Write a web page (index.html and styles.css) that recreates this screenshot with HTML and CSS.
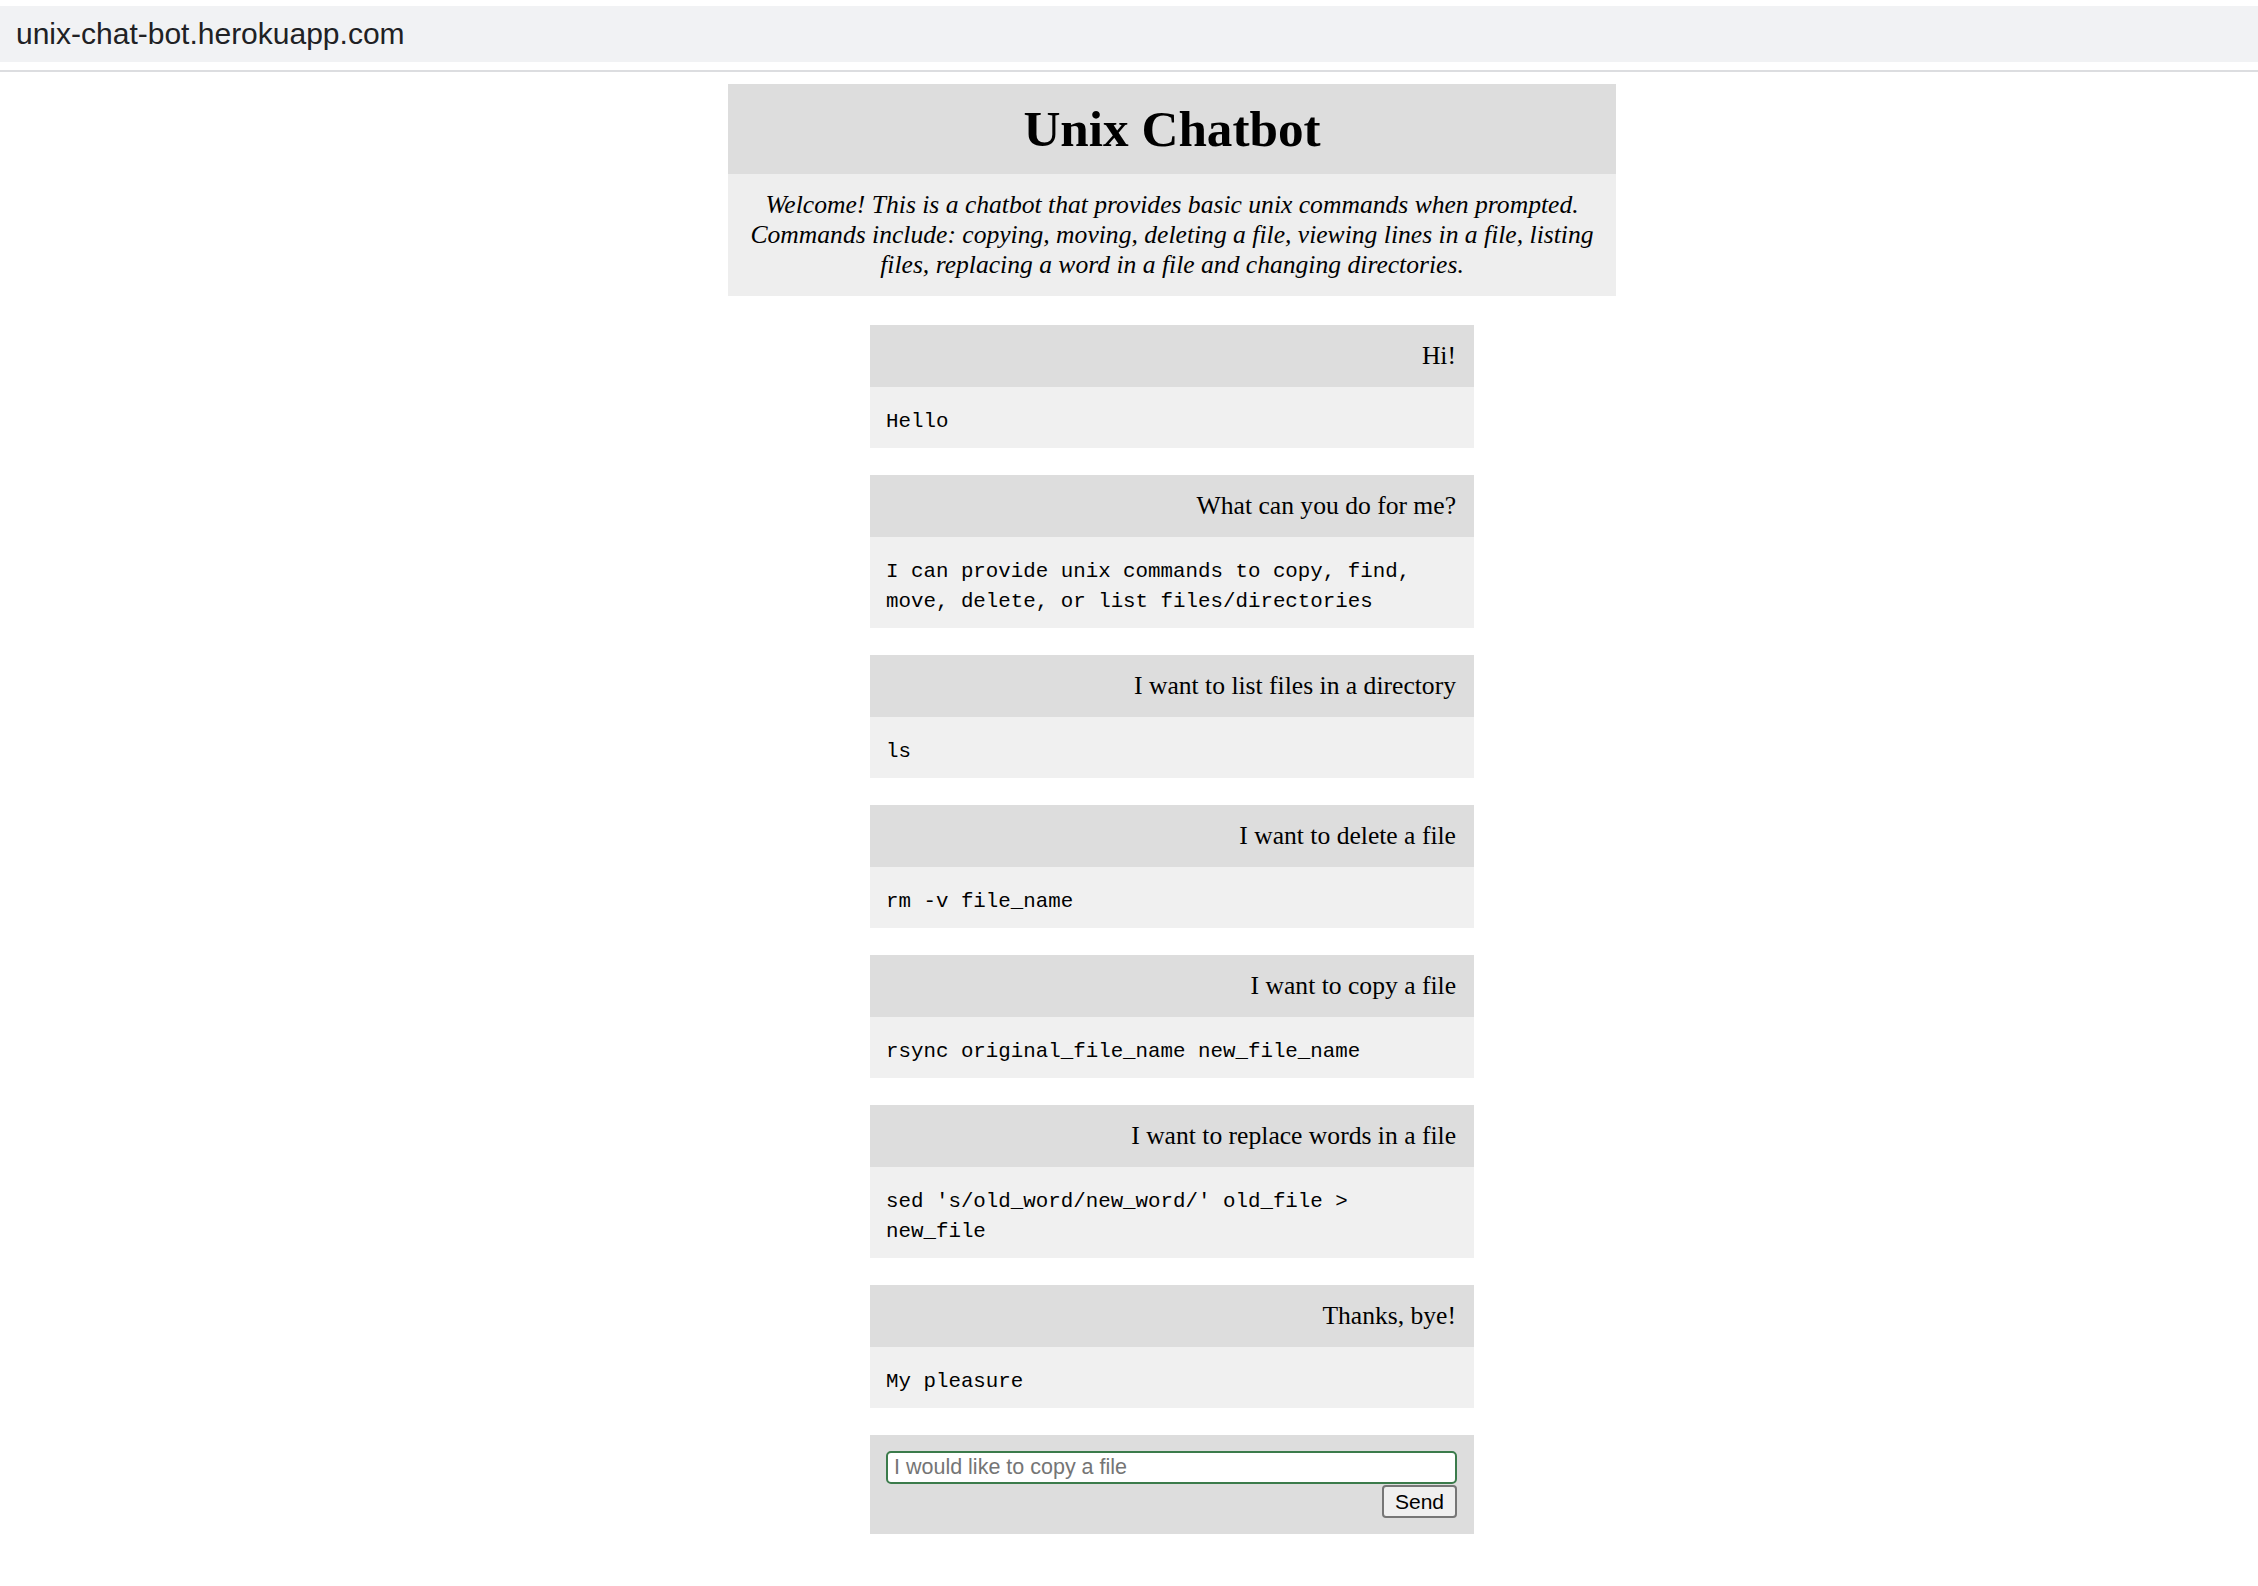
FILE: index.html
```html
<!DOCTYPE html>
<html lang="en">
<head>
<meta charset="utf-8">
<title>Unix Chatbot</title>
<link rel="stylesheet" href="styles.css">
</head>
<body>
<div class="urlbar"><span class="url">unix-chat-bot.herokuapp.com</span></div>
<div class="divider"></div>
<main class="page">
  <header class="intro">
    <h1 class="title">Unix Chatbot</h1>
    <p class="desc">Welcome! This is a chatbot that provides basic unix commands when prompted. Commands include: copying, moving, deleting a file, viewing lines in a file, listing files, replacing a word in a file and changing directories.</p>
  </header>
  <section class="chat">
    <div class="msg">
      <div class="msg-user">Hi!</div>
      <div class="msg-bot">Hello</div>
    </div>
    <div class="msg">
      <div class="msg-user">What can you do for me?</div>
      <div class="msg-bot">I can provide unix commands to copy, find, move, delete, or list files/directories</div>
    </div>
    <div class="msg">
      <div class="msg-user">I want to list files in a directory</div>
      <div class="msg-bot">ls</div>
    </div>
    <div class="msg">
      <div class="msg-user">I want to delete a file</div>
      <div class="msg-bot">rm -v file_name</div>
    </div>
    <div class="msg">
      <div class="msg-user">I want to copy a file</div>
      <div class="msg-bot">rsync original_file_name new_file_name</div>
    </div>
    <div class="msg">
      <div class="msg-user">I want to replace words in a file</div>
      <div class="msg-bot">sed 's/old_word/new_word/' old_file &gt; new_file</div>
    </div>
    <div class="msg">
      <div class="msg-user">Thanks, bye!</div>
      <div class="msg-bot">My pleasure</div>
    </div>
    <form class="composer" onsubmit="return false;">
      <input class="composer-input" type="text" placeholder="I would like to copy a file">
      <div class="composer-actions">
        <button class="send" type="submit">Send</button>
      </div>
    </form>
  </section>
</main>
</body>
</html>
```
FILE: styles.css
```css
html, body {
  margin: 0;
  padding: 0;
  background: #ffffff;
}

body {
  font-family: "Liberation Serif", "Times New Roman", serif;
  color: #000000;
}

.urlbar {
  margin-top: 6px;
  height: 56px;
  background: #f1f2f4;
  display: flex;
  align-items: center;
  padding-left: 16px;
  font-family: "Liberation Sans", Arial, sans-serif;
  font-size: 30px;
  color: #202124;
}

.divider {
  margin-top: 8px;
  height: 2px;
  background: #dcdde0;
}

.page {
  width: 888px;
  margin: 12px 0 0 728px;
}

.title {
  margin: 0;
  background: #dddddd;
  text-align: center;
  font-size: 51.2px;
  line-height: 60px;
  padding: 15px 0;
  font-weight: bold;
}

.desc {
  margin: 0;
  background: #eeeeee;
  text-align: center;
  font-style: italic;
  font-size: 25.6px;
  line-height: 30px;
  padding: 16px 20px;
}

.chat {
  width: 604px;
  margin: 29px auto 0;
  display: flex;
  flex-direction: column;
  gap: 27px;
}

.msg-user {
  background: #dddddd;
  text-align: right;
  padding: 16px 18px;
  font-size: 25.6px;
  line-height: 30px;
}

.msg-bot {
  background: #f0f0f0;
  padding: 20px 16px 11px;
  font-family: "Liberation Mono", "Courier New", monospace;
  font-size: 20.8px;
  line-height: 30px;
}

.composer {
  margin: 0;
  background: #dddddd;
  padding: 16px 17px 16px 16px;
}

.composer-input {
  display: block;
  width: 100%;
  box-sizing: border-box;
  height: 33px;
  margin: 0;
  border: 2px solid #3b7b4b;
  border-radius: 5px;
  background: #ffffff;
  font-family: "Liberation Sans", Arial, sans-serif;
  font-size: 21.5px;
  padding: 0 6px;
  outline: none;
  color: #000000;
}

.composer-input::placeholder {
  color: #757575;
}

.composer-actions {
  display: flex;
  justify-content: flex-end;
  margin-top: 1px;
}

.send {
  height: 33px;
  width: 75px;
  margin: 0;
  padding: 0;
  font-family: "Liberation Sans", Arial, sans-serif;
  font-size: 21px;
  background: #efefef;
  border: 2px solid #767676;
  border-radius: 4px;
  color: #000000;
}
```
